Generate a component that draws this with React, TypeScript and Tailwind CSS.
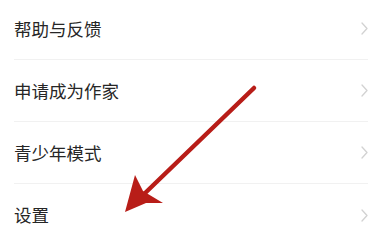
const items = ["帮助与反馈", "申请成为作家", "青少年模式", "设置"]

const Chevron = () => (
  <svg width="7" height="13" viewBox="0 0 7 13" fill="none">
    <path d="M1 1l5 5.5L1 12" stroke="#d2d2d2" strokeWidth="1.3" strokeLinecap="round" strokeLinejoin="round" />
  </svg>
)

export default function App() {
  return (
    <div className="relative w-[377px] h-[236px] overflow-hidden bg-white" style={{ fontFamily: '"Noto Sans CJK SC", "Noto Sans", sans-serif' }}>
      <div className="flex flex-col -mt-[2px]">
        {items.map((label, i) => (
          <div key={label} className="pl-[14px] pr-[9px]">
            <div className={`flex items-center justify-between h-[62px] ${i < items.length - 1 ? "border-b border-[#f1f1f1]" : ""}`}>
              <span className="text-[17.5px] leading-none text-[#262626]">{label}</span>
              <Chevron />
            </div>
          </div>
        ))}
      </div>
      <svg className="absolute left-0 top-0 pointer-events-none" width="377" height="236" viewBox="0 0 377 236">
        <line x1="254" y1="88" x2="142" y2="196" stroke="#b81d18" strokeWidth="4.5" strokeLinecap="round" />
        <path d="M125 212 L135 175 L143 191 L163 203 L146 203 Z" fill="#b81d18" />
      </svg>
    </div>
  )
}
